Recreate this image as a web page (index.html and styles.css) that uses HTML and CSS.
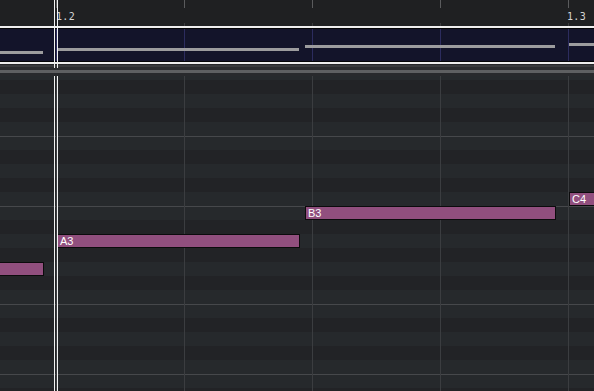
FILE: index.html
```html
<!DOCTYPE html>
<html>
<head>
<meta charset="utf-8">
<link rel="stylesheet" href="styles.css">
</head>
<body>
<div class="roll">
  <div class="ruler">
    <span class="tick" style="left:56px"></span>
    <span class="tick" style="left:184px"></span>
    <span class="tick" style="left:312px"></span>
    <span class="tick" style="left:440px"></span>
    <span class="tick" style="left:568px"></span>
    <span class="subtick" style="left:184px"></span>
    <span class="subtick" style="left:312px"></span>
    <span class="subtick" style="left:440px"></span>
    <span class="subtick" style="left:568px"></span>
    <span class="bar-label" style="left:56px">1.2</span>
    <span class="bar-label" style="left:567px">1.3</span>
  </div>
  <div class="region">
    <div class="region-inner">
      <span class="mini" style="left:0;width:43px;top:22px"></span>
      <span class="mini" style="left:58px;width:241px;top:19px"></span>
      <span class="mini" style="left:305px;width:250px;top:16px"></span>
      <span class="mini" style="left:569px;width:40px;top:14px"></span>
    </div>
  </div>
  <div class="band"></div>
  <div class="grid">
    <div class="rows">
      <div class="row white">&nbsp;</div>
      <div class="row black"></div>
      <div class="row white"></div>
      <div class="row black"></div>
      <div class="row white"></div>
      <div class="row white eline"></div>
      <div class="row black"></div>
      <div class="row white"></div>
      <div class="row black"></div>
      <div class="row white"></div>
      <div class="row white eline"></div>
      <div class="row black"></div>
      <div class="row white"></div>
      <div class="row black"></div>
      <div class="row white"></div>
      <div class="row black"></div>
      <div class="row white"></div>
      <div class="row white eline"></div>
      <div class="row black"></div>
      <div class="row white"></div>
      <div class="row black"></div>
      <div class="row white"></div>
      <div class="row white eline"></div>
      <div class="row black"></div>
      <div class="row white"></div>
    </div>
    <div class="vlines"></div>
    <div class="note" style="left:-10px;top:186px;width:54px"></div>
    <div class="note" style="left:57px;top:158px;width:243px">A3</div>
    <div class="note" style="left:305px;top:130px;width:251px">B3</div>
    <div class="note" style="left:569px;top:116px;width:60px">C4</div>
  </div>
  <div class="playhead top"></div>
  <div class="playhead bottom"></div>
</div>
</body>
</html>
```
FILE: styles.css
```css
html, body {
  margin: 0;
  padding: 0;
  background: #202124;
}
.roll {
  position: relative;
  width: 594px;
  height: 391px;
  overflow: hidden;
  display: flex;
  flex-direction: column;
  font-family: "Liberation Sans", Arial, sans-serif;
}
.ruler {
  position: relative;
  height: 26px;
  flex: none;
  background: #1f2022;
}
.tick {
  position: absolute;
  top: 0;
  width: 1px;
  height: 8px;
  background: #5a5b5d;
}
.subtick {
  position: absolute;
  top: 23px;
  width: 1px;
  height: 3px;
  background: #3a3b3d;
}
.bar-label {
  position: absolute;
  top: 11px;
  font-family: "DejaVu Sans Mono", monospace;
  font-size: 10px;
  line-height: 12px;
  color: #d4d4d4;
  letter-spacing: 0.3px;
}
.region {
  flex: none;
  border-top: 2px solid #eeeeee;
  border-bottom: 2px solid #eeeeee;
}
.region-inner {
  position: relative;
  height: 32px;
  border-top: 1px solid #050508;
  border-bottom: 1px solid #050508;
  background-color: #13142a;
  background-image: linear-gradient(to right, #2c2c5e 1px, transparent 1px);
  background-size: 128px 100%;
  background-position: 56px 0;
}
.mini {
  position: absolute;
  height: 3px;
  background: #9c9c9e;
}
.band {
  flex: none;
  height: 12px;
  background: linear-gradient(to bottom,
    #26272a 0, #26272a 1px,
    #3a3b3e 1px, #3a3b3e 3px,
    #2b2c2f 3px, #2b2c2f 6px,
    #5e5f61 6px, #5e5f61 9px,
    #28292c 9px, #28292c 12px);
}
.grid {
  position: relative;
  flex: 1;
  overflow: hidden;
}
.rows {
  display: flex;
  flex-direction: column;
  margin-top: -10px;
}
.row {
  height: 14px;
  box-sizing: border-box;
  flex: none;
}
.row.white { background: #26292c; }
.row.black { background: #222326; }
.row.eline { border-top: 1px solid #46484b; }
.vlines {
  position: absolute;
  inset: 0;
  background-image: linear-gradient(to right, #3b3d40 1px, transparent 1px);
  background-size: 128px 100%;
  background-position: 56px 0;
}
.note {
  position: absolute;
  height: 14px;
  box-sizing: border-box;
  border: 1px solid #0b0b0c;
  background: #914f7e;
  color: #ffffff;
  font-size: 11px;
  line-height: 12px;
  padding-left: 2px;
  white-space: nowrap;
}
.playhead {
  position: absolute;
  left: 54px;
  width: 2px;
  border-left: 1px solid #f2f2f2;
  border-right: 1px solid #f2f2f2;
}
.playhead.top { top: 0; height: 68px; }
.playhead.bottom { top: 76px; bottom: 0; }
```
